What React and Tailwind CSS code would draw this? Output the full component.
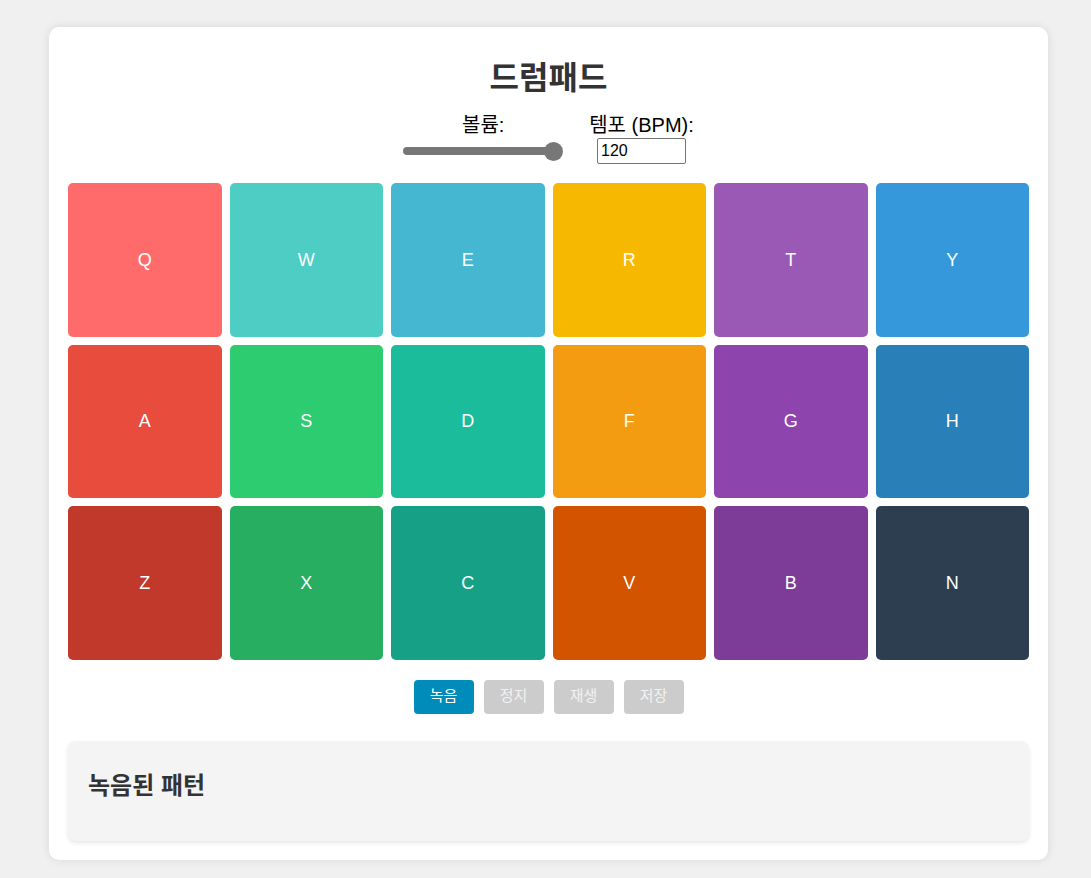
const pads = [
  { key: "Q", color: "bg-[#ff6b6b]" },
  { key: "W", color: "bg-[#4ecdc4]" },
  { key: "E", color: "bg-[#45b7d1]" },
  { key: "R", color: "bg-[#f7b801]" },
  { key: "T", color: "bg-[#9b59b6]" },
  { key: "Y", color: "bg-[#3498db]" },
  { key: "A", color: "bg-[#e74c3c]" },
  { key: "S", color: "bg-[#2ecc71]" },
  { key: "D", color: "bg-[#1abc9c]" },
  { key: "F", color: "bg-[#f39c12]" },
  { key: "G", color: "bg-[#8e44ad]" },
  { key: "H", color: "bg-[#2980b9]" },
  { key: "Z", color: "bg-[#c0392b]" },
  { key: "X", color: "bg-[#27ae60]" },
  { key: "C", color: "bg-[#16a085]" },
  { key: "V", color: "bg-[#d35400]" },
  { key: "B", color: "bg-[#7d3c98]" },
  { key: "N", color: "bg-[#2c3e50]" },
];

const controls = ["녹음", "정지", "재생", "저장"];

export default function App() {
  return (
    <div className="min-h-[878px] bg-[#f0f0f0] pt-[27px] font-['Liberation_Sans','Noto_Sans_CJK_KR',sans-serif]">
      <div className="ml-[49px] w-[999px] rounded-[10px] bg-white px-[19px] pb-[19px] pt-5 shadow-[0_0_10px_rgba(0,0,0,0.1)]">
        <h1 className="mt-[12px] text-center text-[32px] font-bold leading-[38px] text-[#333]">드럼패드</h1>

        {/* Controls */}
        <div className="mt-[16px] flex justify-center gap-[26px] text-black">
          <div className="flex flex-col items-center">
            <label className="text-[20px] leading-[24px]">볼륨:</label>
            <div className="mt-[1px] flex h-[26px] w-[160px] items-center">
              <div className="h-2 w-[151px] rounded-full bg-[#777]" />
              <div className="-ml-[10px] h-[19px] w-[19px] rounded-full bg-[#777]" />
            </div>
          </div>
          <div className="flex flex-col items-center">
            <label className="text-[20px] leading-[24px]">템포 (BPM):</label>
            <input
              type="number"
              defaultValue={120}
              className="mt-[1px] h-[26px] w-[89px] rounded-[2px] border border-[#767676] px-[3px] text-[16px] outline-none [appearance:textfield]"
            />
          </div>
        </div>

        {/* Pads */}
        <div className="mt-[19px] grid grid-cols-6 gap-2">
          {pads.map((p) => (
            <button
              key={p.key}
              className={`${p.color} flex aspect-square items-center justify-center rounded-[5px] text-lg text-white`}
            >
              {p.key}
            </button>
          ))}
        </div>

        {/* Recorder */}
        <div className="mt-[20px] flex justify-center gap-[10px]">
          {controls.map((label, i) => (
            <button
              key={label}
              className={`h-[34px] w-[60px] rounded-[4px] text-center text-[15px] ${
                i === 0 ? "bg-[#008cba] text-white" : "bg-[#cccccc] text-[#f2f2f2]"
              }`}
            >
              {label}
            </button>
          ))}
        </div>

        <div className="mt-[27px] rounded-[8px] bg-[#f4f4f4] px-5 py-5 shadow-[0_2px_4px_rgba(0,0,0,0.1)]">
          <h3 className="mb-[20px] mt-[10px] text-[24px] font-bold leading-[30px] text-[#333]">녹음된 패턴</h3>
        </div>
      </div>
    </div>
  );
}
